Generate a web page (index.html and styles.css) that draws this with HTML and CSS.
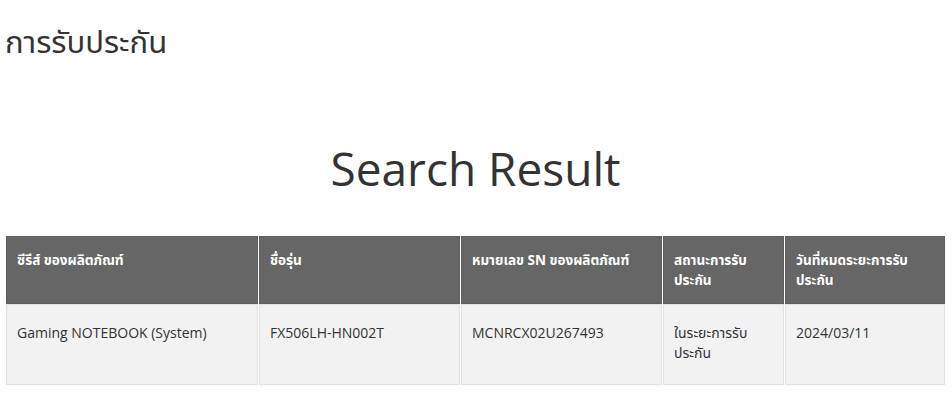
FILE: index.html
```html
<!DOCTYPE html>
<html lang="th">
<head>
<meta charset="utf-8">
<link rel="stylesheet" href="styles.css">
</head>
<body>
<div class="page">
  <h1 class="page-title">การรับประกัน</h1>
  <h2 class="result-title">Search Result</h2>
  <table class="result-table">
    <colgroup>
      <col class="c1"><col class="c2"><col class="c3"><col class="c4"><col class="c5">
    </colgroup>
    <thead>
      <tr>
        <th>ซีรีส์ ของผลิตภัณฑ์</th>
        <th>ชื่อรุ่น</th>
        <th>หมายเลข SN ของผลิตภัณฑ์</th>
        <th>สถานะการรับประกัน</th>
        <th>วันที่หมดระยะการรับประกัน</th>
      </tr>
    </thead>
    <tbody>
      <tr>
        <td>Gaming NOTEBOOK (System)</td>
        <td>FX506LH-HN002T</td>
        <td>MCNRCX02U267493</td>
        <td>ในระยะการรับประกัน</td>
        <td>2024/03/11</td>
      </tr>
    </tbody>
  </table>
</div>
</body>
</html>
```

FILE: styles.css
```css
html, body {
  margin: 0;
  padding: 0;
  background: #fff;
}
body {
  font-family: "Open Sans", "Noto Sans", "Noto Sans Thai", "Liberation Sans", sans-serif;
  color: #333;
}
.page {
  padding: 0 6px 0 5px;
}
.page-title {
  margin: 0;
  padding-top: 22px;
  font-size: 31px;
  font-weight: 400;
  line-height: 38px;
  color: #333;
}
.result-title {
  margin: 0;
  padding-top: 76px;
  text-align: center;
  font-size: 46px;
  font-weight: 400;
  line-height: 64px;
  color: #333;
}
.result-table {
  margin-top: 36px;
  width: 940px;
  border-collapse: separate;
  border-spacing: 1px 0;
  table-layout: fixed;
  font-size: 14px;
}
.c1 { width: 252px; }
.c2 { width: 201px; }
.c3 { width: 201px; }
.c4 { width: 121px; }
.c5 { width: 160px; }
.result-table th,
.result-table td {
  text-align: left;
  vertical-align: top;
  border: 1px solid #e2e2e2;
  line-height: 20px;
  padding: 13px 10px;
}
.result-table th {
  background: #666;
  color: #fff;
  font-weight: 700;
  font-size: 13.5px;
  height: 39px;
  border-color: #5e5e5e;
}
.result-table td {
  background: #f2f2f2;
  color: #333;
  padding-top: 18px;
  height: 48px;
}
```
